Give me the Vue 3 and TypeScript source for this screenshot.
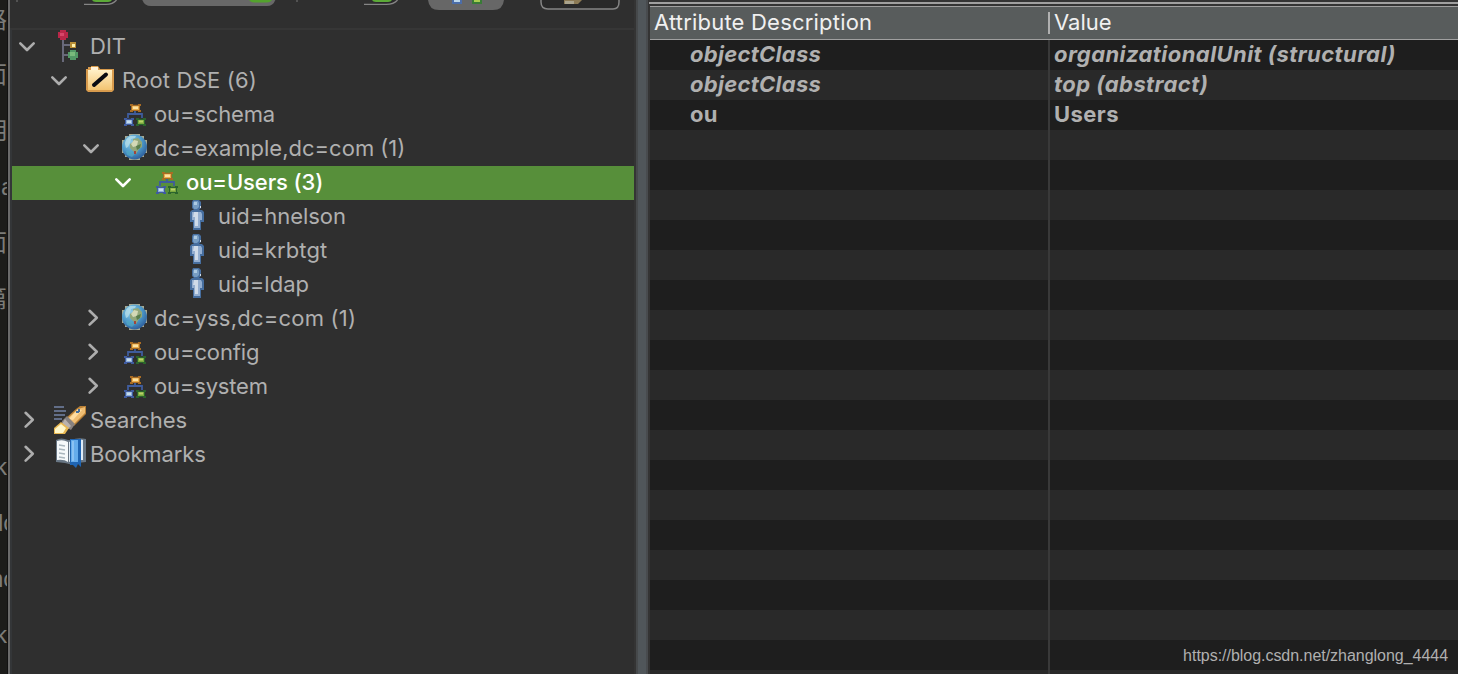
<script setup lang="ts">
type Kind = 'dit' | 'folder' | 'ou' | 'globe' | 'person' | 'search' | 'bookmark'
interface Node { level: number; kind: Kind; label: string; state: 'open' | 'closed' | 'leaf'; ls: number; selected?: boolean }
const nodes: Node[] = [
  { level: 0, kind: 'dit', label: 'DIT', state: 'open', ls: 0 },
  { level: 1, kind: 'folder', label: 'Root DSE (6)', state: 'open', ls: 0.2 },
  { level: 2, kind: 'ou', label: 'ou=schema', state: 'leaf', ls: -0.15 },
  { level: 2, kind: 'globe', label: 'dc=example,dc=com (1)', state: 'open', ls: 0 },
  { level: 3, kind: 'ou', label: 'ou=Users (3)', state: 'open', ls: -0.1, selected: true },
  { level: 4, kind: 'person', label: 'uid=hnelson', state: 'leaf', ls: -0.03 },
  { level: 4, kind: 'person', label: 'uid=krbtgt', state: 'leaf', ls: 0.12 },
  { level: 4, kind: 'person', label: 'uid=ldap', state: 'leaf', ls: 0 },
  { level: 2, kind: 'globe', label: 'dc=yss,dc=com (1)', state: 'closed', ls: 0.22 },
  { level: 2, kind: 'ou', label: 'ou=config', state: 'closed', ls: -0.12 },
  { level: 2, kind: 'ou', label: 'ou=system', state: 'closed', ls: -0.18 },
  { level: 0, kind: 'search', label: 'Searches', state: 'closed', ls: -0.05 },
  { level: 0, kind: 'bookmark', label: 'Bookmarks', state: 'closed', ls: -0.12 },
]
interface Row { name: string; value: string; italic?: boolean }
const filled: Row[] = [
  { name: 'objectClass', value: 'organizationalUnit (structural)', italic: true },
  { name: 'objectClass', value: 'top (abstract)', italic: true },
  { name: 'ou', value: 'Users' },
]
const rows: Row[] = [...filled, ...Array.from({ length: 19 }, () => ({ name: '', value: '' }))]
const fragments = [
  { t: '路', y: 6, x: -17 }, { t: '面', y: 61, x: -17 }, { t: '用', y: 117, x: -16 }, { t: 'a', y: 173, x: 1 }, { t: '面', y: 229, x: -17 },
  { t: '篇', y: 285, x: -17 }, { t: 'k', y: 453, x: -5 }, { t: 'dc', y: 509, x: -10 }, { t: 'nc', y: 565, x: -10 }, { t: 'k', y: 621, x: -5 },
]
</script>

<template>
  <div class="screen">
    <aside class="behind">
      <span v-for="(f, i) in fragments" :key="i" class="frag" :style="{ top: f.y + 'px', left: f.x + 'px' }">{{ f.t }}</span>
    </aside>
    <section class="browser">
      <svg class="toolbar" width="626" height="28" viewBox="10 0 626 28">
        <path d="M17 0v2M297 0v2" stroke="#777" />
        <path d="M84 4.300H106Q113 4.300 116.500 0" fill="#292929" stroke="#858585" stroke-width="1.300" />
        <path d="M92 0h20q-1 2-4 2H96q-3 0-4-2z" fill="#5caa38" />
        <path d="M142 -2V-1Q144 6 151 6H267Q274 6 276 -2z" fill="#686868" />
        <path d="M249 0h23q-2 2.500-5 2.500H254q-3 0-5-2.500z" fill="#53a22d" />
        <path d="M364 4.300H386Q394 4.300 397.500 0" fill="#292929" stroke="#858585" stroke-width="1.300" />
        <path d="M372 0h20q-1 2-4 2H376q-3 0-4-2z" fill="#5caa38" />
        <path d="M428 -2V0Q429 10 439 10H493Q503 10 504 0V-2z" fill="#676767" />
        <path d="M452 0h10v4h-10z" fill="#4b6da9" /><path d="M454 0h6v2h-6z" fill="#bcd8ec" />
        <path d="M472 0h10v4h-10z" fill="#397b36" /><path d="M474 0h6v2h-6z" fill="#a8ce51" />
        <path d="M541 -2V2Q541 9 548 9H613Q619 9 619 2V-2" fill="#292929" stroke="#858585" stroke-width="1.500" />
        <path d="M564 0h18l-4 4h-14z" fill="#8c7a55" /><path d="M565 1h9v3h-9z" fill="#aaa48e" />
      </svg>
      <div class="tree">
        <div v-for="n in nodes" :key="n.label" class="node" :class="[{ selected: n.selected }, 'lv' + n.level]">
          <svg class="chev" width="20" height="20" viewBox="0 0 20 20">
            <path v-if="n.state === 'open'" d="M3.300 7.300 10 14 16.700 7.300" />
            <path v-else-if="n.state === 'closed'" d="M8.600 2.800 15.800 9.700 8.600 16.600" />
          </svg>
          <svg class="icon" width="32" height="32" viewBox="0 0 32 32">
            <g v-if="n.kind === 'dit'">
              <path d="M9 8V32M9 15H16M9 25H16" stroke="#68697a" stroke-width="2" fill="none" />
              <path d="M6 0h6v2h2v6h-2v2H6V8H4V2h2z" fill="#b92749" /><path d="M6 3h4v3H6z" fill="#d64669" />
              <path d="M16 12h6v6h-6z" fill="#b88d35" /><path d="M18 14h3v3h-3z" fill="#fff1ab" />
              <path d="M16 20h6v2h2v6h-2v2h-6v-2h-2v-6h2z" fill="#539866" /><path d="M16 22h5v4h-5z" fill="#79ba7b" />
            </g>
            <g v-else-if="n.kind === 'folder'">
              <path d="M0 5h2V3h3V2h7l2 3h14v21l-2 2H2l-2-2z" fill="#d89b4d" />
              <path d="M2 6h24v20H2z" fill="url(#folderFill)" /><path d="M5 3h7v3H5z" fill="#fff2d8" />
              <path d="M8 21 20 10.500" stroke="#090b12" stroke-width="4" stroke-linecap="round" />
            </g>
            <g v-else-if="n.kind === 'ou'">
              <path d="M17 13v3M10 20v-4h14v4" stroke="#3f5c9c" stroke-width="1.800" fill="none" />
              <path d="M12 6h3v.7h5V6h3v2h-1v4h1v2h-3v-1h-5v1h-3v-2h1V8h-1z" fill="#a96c24" />
              <path d="M14 8h7v4h-7z" fill="#e8ad4c" /><path d="M15 8.500h5v2.500h-5z" fill="#ffe2a0" />
              <path d="M6 20h3v.7h4V20h3v2h-1v4h1v2h-3v-1H9v1H6v-2h1v-4H6z" fill="#3f5ba0" />
              <path d="M8 22h6v4H8z" fill="#8daed8" /><path d="M9 22.500h4v2.500H9z" fill="#c6dcec" />
              <path d="M18 20h3v.7h4V20h3v2h-1v4h1v2h-3v-1h-4v1h-3v-2h1v-4h-1z" fill="#2b642d" />
              <path d="M20 22h6v4h-6z" fill="#79a83e" /><path d="M21 22.500h4v2h-4z" fill="#b9d269" />
            </g>
            <g v-else-if="n.kind === 'globe'">
              <path d="M11 2h11v2h4v4h3v13h-3v4h-4v3H11v-3H7v-4H4V8h3V4h4z" fill="#a9aa91" />
              <circle cx="16.500" cy="15" r="12.500" fill="url(#globeFill)" />
              <path d="M7 12q0-5 5-8h6l-1 2-4 1-1 4-2 4-2 1z" fill="#bfe4ed" opacity=".7" />
              <path d="m15 7 5-1 4 4v5l-3 2-3 5-3-3-3-3v-4l3-2z" fill="#91a77a" />
              <path d="m16 8 4 1-1 5-4 1-2-3z" fill="#d3d9b7" /><path d="m18 14 5-2-1 4-3 2z" fill="#577e4c" />
              <path d="M8 19h6l3 3-3 3-5-2z" fill="#51aac5" opacity=".7" />
              <path d="M16 19h2v3h-2z" fill="#a1453c" />
            </g>
            <g v-else-if="n.kind === 'person'">
              <path d="M11 0h6l2 2v6l-2 2h3l2 2v10h-3v8h-8v-8H8V12l2-2h2l-2-2V2z" fill="#466e9f" />
              <path d="M12 1h4l1 2v4l-2 2h-3l-1-2V3z" fill="#779dc3" /><path d="M12 2h3v3h-3z" fill="#adcae2" />
              <path d="M10 12h9l1 2v6h-2v8h-6v-8h-2z" fill="#93aed0" />
              <path d="M12 12h4v14h-3v-9h-2z" fill="#cfdbe9" /><path d="M18 6h1v2h-1z" fill="#d0ddec" />
            </g>
            <g v-else-if="n.kind === 'search'">
              <path d="M0 3h10M0 7h12M0 11h11M0 15h8" stroke="#7484a7" stroke-width="1.700" />
              <path d="M22 5 26 2h6v8L20 22l-8-8z" fill="#b98036" />
              <path d="m24 5 7-2v6L20 20l-6-6z" fill="#efbd72" /><path d="m24 5 4 1-9 10-4-1z" fill="#ffdda0" />
              <path d="m13 12 8 8-4 6-9-5v-4z" fill="#87817f" /><path d="m11 15 6 7-3 3-6-5z" fill="#b9b2ae" />
              <path d="m7 18 8 6-4 6H0v-6z" fill="#e8b852" /><path d="m7 20 5 4-3 5H1v-4z" fill="#fff7c9" />
              <path d="M22 8h3M25 5v3" stroke="#446e9b" stroke-width="2" />
            </g>
            <g v-else>
              <path d="M2 2q5-3 12 0h3q7-3 15-1v23l-9 1-4 2-8-2-9-1z" fill="#687684" />
              <path d="M3 3q6-2 11 1v20q-4-3-11-2z" fill="#f5f9fb" /><path d="M15 4q6-4 14-2v20h-9l-5 2z" fill="#e0edf8" />
              <path d="M5 7l6 1M5 11l6 1M5 15l6 1M5 19l6 1" stroke="#a8b5bd" stroke-width="1.500" />
              <path d="M16 1h11v28l-3-3-2 4-3-3h-3z" fill="#1f65b3" /><path d="M17 2h7v22h-7z" fill="#65aceb" />
              <path d="M18 3h2v20h-2z" fill="#8bc2f2" />
            </g>
          </svg>
          <span class="label" :style="{ letterSpacing: n.ls + 'px' }">{{ n.label }}</span>
        </div>
      </div>
    </section>
    <div class="splitter"></div>
    <section class="entry">
      <div class="topline"></div>
      <div class="head"><div class="name">Attribute Description</div><div class="value">Value</div></div>
      <div v-for="(r, i) in rows" :key="i" class="row" :class="{ italic: r.italic }">
        <div class="name"><span>{{ r.name }}</span></div><div class="value"><span>{{ r.value }}</span></div>
      </div>
      <span class="watermark">https://blog.csdn.net/zhanglong_4444</span>
    </section>
    <svg class="defs" width="0" height="0">
      <defs>
        <linearGradient id="folderFill" x2="0" y2="1"><stop stop-color="#fff0c7" /><stop offset="1" stop-color="#f3c471" /></linearGradient>
        <radialGradient id="globeFill" cx=".38" cy=".3" r=".8"><stop stop-color="#8fcbe5" /><stop offset=".5" stop-color="#4f9ccb" /><stop offset="1" stop-color="#254f91" /></radialGradient>
      </defs>
    </svg>
  </div>
</template>

<style>
html, body { margin: 0; overflow: hidden; background: #2f2f2f; }
</style>
<style scoped>
.screen { width: 1458px; height: 674px; display: flex; overflow: hidden; position: relative; background: #2f2f2f; font-family: Inter, "Liberation Sans", sans-serif; font-size: 22px; color: #b0b0b0; }
.behind { width: 7px; flex: none; background: #1c1c1a; border-right: 1px solid #111; position: relative; overflow: hidden; }
.frag { position: absolute; white-space: nowrap; font: 24px/28px "Liberation Sans", "Noto Sans CJK SC", sans-serif; color: #7c7c79; }
.browser { width: 624px; flex: none; border-left: 2px solid #6a6a6a; border-right: 2px solid #343434; background: #2f2f2f; }
.toolbar { display: block; }
.tree { border-top: 2px solid #363636; border-left: 2px solid #343638; box-sizing: border-box; height: 646px; }
.node { height: 34px; display: flex; align-items: flex-start; box-sizing: border-box; }
.selected { background: #578f3a; color: #fff; font-weight: 500; }
.lv0 { padding-left: 5px; }
.lv1 { padding-left: 37px; }
.lv2 { padding-left: 69px; }
.lv3 { padding-left: 101px; }
.lv4 { padding-left: 133px; }
.chev { margin: 6px 17px 0 0; flex: none; fill: none; stroke: #adadad; stroke-width: 2.600; stroke-linecap: round; stroke-linejoin: round; }
.selected .chev { stroke: #fff; }
.icon { flex: none; margin-right: 4px; }
.label { line-height: 33px; white-space: pre; }
.splitter { width: 12px; flex: none; box-sizing: border-box; background: #50565a; border-left: 2px solid #46494b; border-right: 2px solid #484b4e; }
.entry { flex: 1; min-width: 0; position: relative; padding-left: 2px; background: #343434; overflow: hidden; }
.topline { height: 2px; margin-top: 2px; margin-left: -1px; background: #a0a0a0; }
.head { height: 34px; margin-top: 2px; box-sizing: border-box; border-top: 1px solid #a0a0a0; border-bottom: 1px solid #a0a0a0; background: #585c5c; color: #f0f0f0; display: flex; line-height: 30px; }
.name { width: 398px; flex: none; white-space: nowrap; }
.value { flex: 1; white-space: nowrap; border-left: 2px solid #393939; padding-left: 4px; }
.head .name { padding-left: 4px; width: 394px; letter-spacing: 0.2px; }
.head .value { border-color: #b0b0b0; height: 22px; line-height: 20px; margin-top: 5px; }
.row { height: 30px; display: flex; line-height: 29px; background: #1e1e1e; font-weight: 700; }
.row:nth-child(even) { background: #292929; }
.row .name { padding-left: 40px; width: 358px; letter-spacing: 0.28px; }
.row .value { letter-spacing: 0.43px; }
.italic { font-style: italic; }
.watermark { position: absolute; right: 10px; top: 647px; font: 16px/18px "Liberation Sans", sans-serif; letter-spacing: -0.03px; color: #b0b0b0; }
.defs { position: absolute; }
</style>
